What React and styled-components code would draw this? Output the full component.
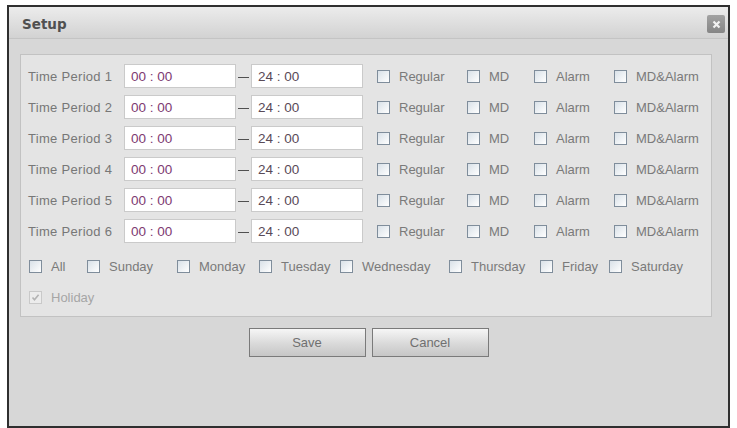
import React from 'react';
import styled, { createGlobalStyle } from 'styled-components';

const GlobalStyle = createGlobalStyle`
  body {
    margin: 0;
    background: #ffffff;
    font-family: 'Liberation Sans', Arial, sans-serif;
  }
`;

const Page = styled.div`
  padding: 5px 0 0 7px;
`;

const Dialog = styled.div`
  width: 723px;
  height: 423px;
  box-sizing: border-box;
  border: 2px solid #2f2f2f;
  background: #d7d7d7;
  display: flex;
  flex-direction: column;
`;

const TitleBar = styled.div`
  height: 31px;
  display: flex;
  align-items: center;
  justify-content: space-between;
  padding: 0 3px 0 13px;
  background: linear-gradient(to bottom, #ececec, #d2d2d2);
  border-bottom: 1px solid #c4c4c4;
`;

const Title = styled.span`
  font-family: 'DejaVu Sans', Verdana, sans-serif;
  font-weight: bold;
  font-size: 13.5px;
  color: #505050;
  margin-top: 2px;
`;

const CloseButton = styled.div`
  width: 18px;
  height: 18px;
  margin-top: 3px;
  border-radius: 2px;
  background: linear-gradient(to bottom, #a2a2a2, #858585);
  display: flex;
  align-items: center;
  justify-content: center;
`;

const Panel = styled.div`
  margin: 15px 16px 0 11px;
  padding: 9px 8px 7px 7px;
  border: 1px solid #c2c2c2;
  background: #e4e4e4;
  display: flex;
  flex-direction: column;
  gap: 7px;
`;

const Row = styled.div`
  height: 24px;
  display: flex;
  align-items: center;
  margin-top: ${(p) => p.$top || 0}px;
  padding-left: ${(p) => p.$indent || 0}px;
`;

const Label = styled.span`
  width: 96px;
  font-size: 13px;
  letter-spacing: 0.3px;
  color: #777777;
`;

const TimeBox = styled.div`
  width: 112px;
  height: 24px;
  box-sizing: border-box;
  border: 1px solid #cacaca;
  background: #ffffff;
  padding-left: 6px;
  display: flex;
  align-items: center;
  font-size: 13.5px;
  color: ${(p) => p.$color};
`;

const Dash = styled.span`
  width: 11px;
  height: 1px;
  margin: 3px 2px 0 2px;
  background: #505050;
`;

const Checks = styled.div`
  display: flex;
  align-items: center;
  margin-left: 14px;
`;

const CheckItem = styled.label`
  display: flex;
  align-items: center;
  gap: 9px;
  width: ${(p) => (p.$w ? `${p.$w}px` : 'auto')};
  font-size: 13px;
  color: ${(p) => (p.$disabled ? '#a6a6a6' : '#7a7a7a')};
`;

const Box = styled.span`
  width: 13px;
  height: 13px;
  box-sizing: border-box;
  flex-shrink: 0;
  border: 1px solid ${(p) => (p.$disabled ? '#c9c9c9' : '#7f8d9b')};
  background: ${(p) =>
    p.$disabled ? '#ececec' : 'linear-gradient(135deg, #d9e1e8, #ffffff)'};
  display: flex;
  align-items: center;
  justify-content: center;
`;

const ButtonRow = styled.div`
  display: flex;
  justify-content: center;
  gap: 6px;
  margin-top: 11px;
`;

const Button = styled.button`
  width: 117px;
  height: 29px;
  border: 1px solid #7a7a7a;
  background: linear-gradient(to bottom, #f6f6f6, #d9d9d9 55%, #c6c6c6);
  font-family: 'Liberation Sans', Arial, sans-serif;
  font-size: 13px;
  color: #707070;
  padding: 0;
`;

const Check = ({ label, w, checked, disabled }) => (
  <CheckItem $w={w} $disabled={disabled}>
    <Box $disabled={disabled}>
      {checked && (
        <svg width="9" height="9" viewBox="0 0 9 9">
          <path d="M1.5 4.5 L3.5 6.8 L7.6 1.8" fill="none" stroke="#b3b3b3" strokeWidth="1.6" />
        </svg>
      )}
    </Box>
    {label}
  </CheckItem>
);

const modes = [
  { label: 'Regular', w: 90 },
  { label: 'MD', w: 67 },
  { label: 'Alarm', w: 80 },
  { label: 'MD&Alarm' },
];

const days = [
  { label: 'All', w: 58 },
  { label: 'Sunday', w: 90 },
  { label: 'Monday', w: 82 },
  { label: 'Tuesday', w: 81 },
  { label: 'Wednesday', w: 109 },
  { label: 'Thursday', w: 91 },
  { label: 'Friday', w: 69 },
  { label: 'Saturday' },
];

const App = () => {
  return (
    <Page>
      <GlobalStyle />
      <Dialog>
        <TitleBar>
          <Title>Setup</Title>
          <CloseButton>
            <svg width="9" height="9" viewBox="0 0 9 9">
              <path d="M1.5 1.5 L7.5 7.5 M7.5 1.5 L1.5 7.5" stroke="#f2f2f2" strokeWidth="2.2" />
            </svg>
          </CloseButton>
        </TitleBar>
        <Panel>
          {[1, 2, 3, 4, 5, 6].map((n) => (
            <Row key={n}>
              <Label>Time Period {n}</Label>
              <TimeBox $color="#7e3a72">00 : 00</TimeBox>
              <Dash />
              <TimeBox $color="#594a57">24 : 00</TimeBox>
              <Checks>
                {modes.map((m) => (
                  <Check key={m.label} label={m.label} w={m.w} />
                ))}
              </Checks>
            </Row>
          ))}
          <Row $top={4} $indent={1}>
            {days.map((d) => (
              <Check key={d.label} label={d.label} w={d.w} />
            ))}
          </Row>
          <Row $indent={1}>
            <Check label="Holiday" checked disabled />
          </Row>
        </Panel>
        <ButtonRow>
          <Button>Save</Button>
          <Button>Cancel</Button>
        </ButtonRow>
      </Dialog>
    </Page>
  );
};

export default App;
